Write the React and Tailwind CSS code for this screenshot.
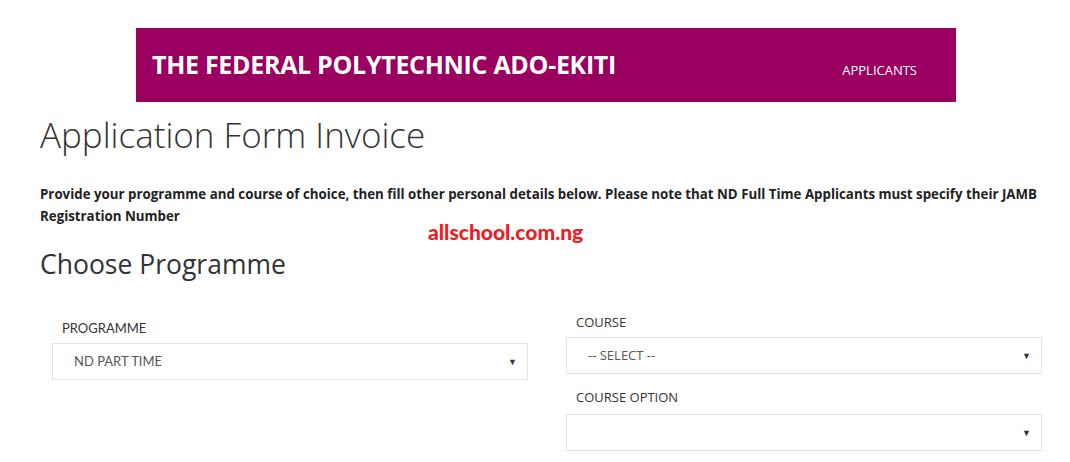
const SEGOE = { fontFamily: '"Open Sans", "Noto Sans", sans-serif' };

function Select({ value, lato }) {
  return (
    <div className="relative flex h-[37px] items-center border border-[#e3e3e3] bg-white pl-[21px] pr-3">
      <span className={`${lato ? "font-['Lato',sans-serif]" : ""} text-[13px] text-[#555]`}>{value}</span>
      <span className="absolute right-[10px] top-1/2 -translate-y-1/2 text-[9px] text-[#333]">▼</span>
    </div>
  );
}

export default function App() {
  return (
    <div className="min-h-[462px] w-[1070px] bg-white text-[#333]" style={SEGOE}>
      {/* Header */}
      <div className="pl-[136px] pt-[28px]">
        <div className="flex h-[74px] w-[820px] items-center justify-between bg-[#99005f] pl-[16px] pr-[39px]">
          <span className="text-[25px] font-bold tracking-[-0.3px] text-white">THE FEDERAL POLYTECHNIC ADO-EKITI</span>
          <span className="mt-[12px] text-[13px] text-white">APPLICANTS</span>
        </div>
      </div>

      <div className="pl-[40px] pr-[28px]">
        <h1 className="mt-[10px] text-[35px] font-light leading-[46px] text-[#333]">Application Form Invoice</h1>

        <p className="mt-[25px] text-[13.3px] font-bold leading-[22px] text-[#222]">
          Provide your programme and course of choice, then fill other personal details below. Please note that ND Full Time Applicants must specify their JAMB Registration Number
        </p>

        {/* watermark */}
        <div className="relative h-0">
          <span className="absolute left-[388px] top-[-6px] font-['Lato',sans-serif] text-[21px] font-black leading-none text-[#ee1c25]">
            allschool.com.ng
          </span>
        </div>

        <h2 className="mt-[19px] text-[26.5px] font-normal leading-[36px] text-[#333]">Choose Programme</h2>

        <div className="mt-[31px] flex gap-[38px] pl-[12px]">
          <div className="flex w-[476px] shrink-0 flex-col pt-[6px]">
            <label className="mb-[6px] pl-[10px] font-['Lato',sans-serif] text-[13px] leading-[18px] text-[#333]">PROGRAMME</label>
            <Select value="ND PART TIME" lato />
          </div>
          <div className="flex w-[476px] shrink-0 flex-col">
            <label className="mb-[6px] pl-[10px] text-[13px] leading-[18px] text-[#333]">COURSE</label>
            <Select value="-- SELECT --" />
            <label className="mb-[8px] mt-[14px] pl-[10px] text-[13px] leading-[18px] text-[#333]">COURSE OPTION</label>
            <Select value="" />
          </div>
        </div>
      </div>
    </div>
  );
}
